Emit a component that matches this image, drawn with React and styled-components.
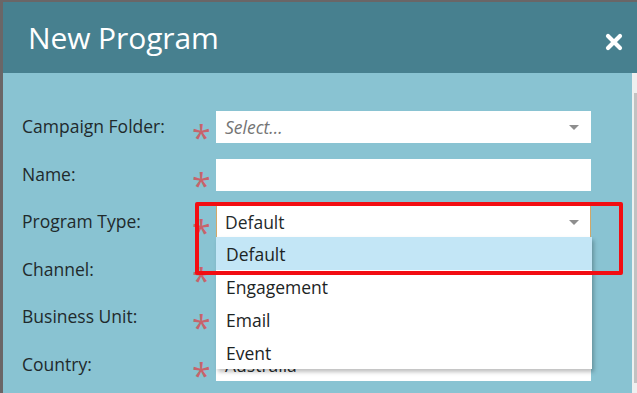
import React from "react";
import styled, { createGlobalStyle } from "styled-components";

const Global = createGlobalStyle`
  html, body { margin: 0; padding: 0; }
  body {
    background: #6a6667;
    font-family: "Open Sans", "Noto Sans", sans-serif;
    overflow: hidden;
  }
`;

const Frame = styled.div`
  padding: 2px 0 0 3px;
  width: 637px;
  height: 393px;
  box-sizing: border-box;
  overflow: hidden;
`;

const Dialog = styled.div`
  display: flex;
  flex-direction: column;
  height: 391px;
  width: 634px;
`;

const Header = styled.div`
  height: 71px;
  flex: none;
  background: #47808f;
  display: flex;
  align-items: center;
  justify-content: space-between;
  padding: 0 13px 0 25px;
  box-sizing: border-box;
`;

const Title = styled.h1`
  margin: 0;
  color: #ffffff;
  font-weight: 400;
  font-size: 30px;
  line-height: 40px;
  letter-spacing: -0.1px;
`;

const Close = styled.button`
  border: 0;
  background: none;
  padding: 0;
  width: 20px;
  height: 20px;
  display: flex;
  align-items: center;
  justify-content: center;
  margin-top: 8px;
`;

const Body = styled.div`
  flex: 1;
  display: flex;
  background: #89c3d2;
  overflow: hidden;
`;

const Form = styled.div`
  flex: 1;
  display: grid;
  grid-template-columns: 170px 24px 375px;
  grid-auto-rows: 32px;
  row-gap: 15.5px;
  padding: 38px 0 0 19px;
  align-content: start;
`;

const Label = styled.div`
  display: flex;
  align-items: center;
  font-size: 17.5px;
  color: #1f2a2c;
  padding-bottom: 2px;
  white-space: nowrap;
`;

const Star = styled.div`
  color: #c7636b;
  font-size: 34px;
  line-height: 32px;
  padding-top: 10px;
  box-sizing: border-box;
  height: 32px;
`;

const Field = styled.div`
  position: relative;
  background: #ffffff;
  display: flex;
  align-items: center;
  justify-content: space-between;
  padding: 0 11px 0 8px;
  box-sizing: border-box;
  border-left: 1px solid ${(p) => (p.$focused ? "#d2a868" : "#ffffff")};
  border-right: 1px solid ${(p) => (p.$focused ? "#d2a868" : "#ffffff")};
  font-size: 17.5px;
  color: #1f2a2c;
`;

const Placeholder = styled.span`
  font-style: italic;
  color: #747474;
`;

const Caret = styled.span`
  width: 0;
  height: 0;
  border-left: 5px solid transparent;
  border-right: 5px solid transparent;
  border-top: 5px solid #8e8e8e;
  margin-top: 1px;
`;

const Menu = styled.ul`
  position: absolute;
  left: -1px;
  top: 31px;
  width: 376px;
  margin: 0;
  padding: 0;
  list-style: none;
  background: #ffffff;
  box-shadow: 2px 3px 4px rgba(0, 0, 0, 0.25);
  z-index: 5;
`;

const Option = styled.li`
  height: 33px;
  display: flex;
  align-items: center;
  padding-left: 10px;
  font-size: 17.5px;
  color: #1c2424;
  background: ${(p) => (p.$active ? "#c3e6f6" : "#ffffff")};
`;

const Highlight = styled.div`
  position: absolute;
  left: -22px;
  top: -4px;
  width: 428px;
  height: 73px;
  border: 4px solid #f20d12;
  border-radius: 2px;
  box-sizing: border-box;
  z-index: 6;
  pointer-events: none;
`;

const Scrollbar = styled.div`
  width: 5px;
  flex: none;
  background: #efefef;
  padding: 20px 0 0 2px;
  box-sizing: border-box;
  overflow: hidden;
`;

const Thumb = styled.div`
  height: 290px;
  background: #c2c2c2;
`;

const rows = [
  { label: "Campaign Folder:", kind: "select", value: "Select..." },
  { label: "Name:", kind: "text" },
  { label: "Program Type:", kind: "open", value: "Default" },
  { label: "Channel:", kind: "text" },
  { label: "Business Unit:", kind: "text" },
  { label: "Country:", kind: "text", value: "Australia" },
];

const options = ["Default", "Engagement", "Email", "Event"];

export default function App() {
  return (
    <>
      <Global />
      <Frame>
        <Dialog>
          <Header>
            <Title>New Program</Title>
            <Close aria-label="Close">
              <svg width="18" height="18" viewBox="0 0 18 18">
                <path
                  d="M3 3 L15 15 M15 3 L3 15"
                  stroke="#ffffff"
                  strokeWidth="4.2"
                  strokeLinecap="round"
                />
              </svg>
            </Close>
          </Header>
          <Body>
            <Form>
              {rows.map((r) => (
                <React.Fragment key={r.label}>
                  <Label>{r.label}</Label>
                  <Star>*</Star>
                  <Field $focused={r.kind === "open"}>
                    {r.kind === "select" && <Placeholder>{r.value}</Placeholder>}
                    {r.kind === "open" && <span>{r.value}</span>}
                    {r.kind === "text" && <span>{r.value || ""}</span>}
                    {(r.kind === "select" || r.kind === "open") && <Caret />}
                    {r.kind === "open" && (
                      <>
                        <Menu>
                          {options.map((o, i) => (
                            <Option key={o} $active={i === 0}>
                              {o}
                            </Option>
                          ))}
                        </Menu>
                        <Highlight />
                      </>
                    )}
                  </Field>
                </React.Fragment>
              ))}
            </Form>
            <Scrollbar>
              <Thumb />
            </Scrollbar>
          </Body>
        </Dialog>
      </Frame>
    </>
  );
}
